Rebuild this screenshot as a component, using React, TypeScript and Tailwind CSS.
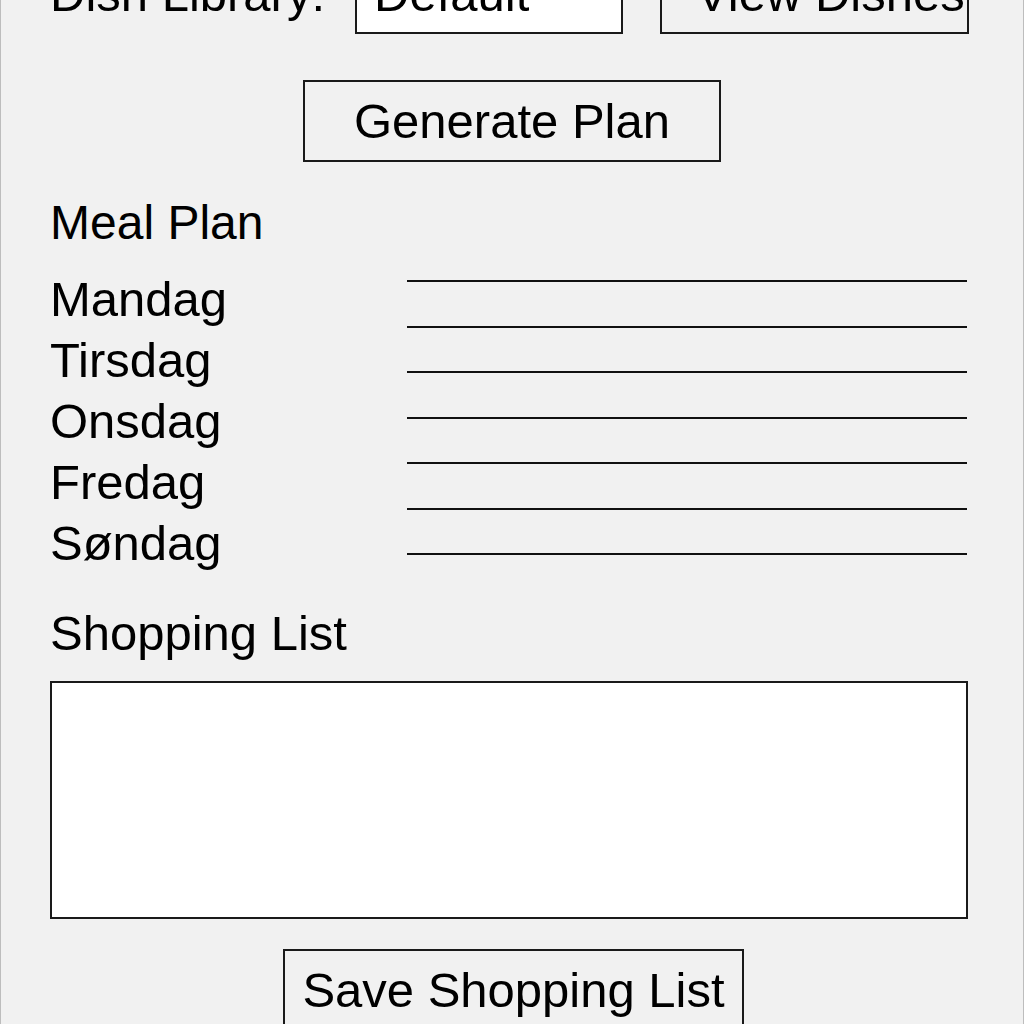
const days = ["Mandag", "Tirsdag", "Onsdag", "Fredag", "Søndag"];

function OutlineButton(props: { label: string; className?: string }) {
  return (
    <button
      className={[
        "h-[82px] border-2 border-[#1a1a1a] bg-[#f1f1f1] text-[49px] leading-[56px] text-black",
        props.className ?? "",
      ].join(" ")}
    >
      {props.label}
    </button>
  );
}

export default function App() {
  return (
    <div
      className="h-[1024px] overflow-hidden border-x border-[#bdbdbd] bg-[#f1f1f1] text-black"
      style={{ fontFamily: '"Liberation Sans", Arial, sans-serif' }}
    >
      {/* library picker row, top is cut off */}
      <div className="mt-[-46px] flex items-center pl-[49px]">
        <div className="w-[305px] text-[49px] leading-[56px]">Dish Library:</div>
        <div className="flex h-[80px] w-[268px] items-center border-2 border-[#1a1a1a] bg-white pl-[17px] text-[49px] leading-[56px]">
          Default
        </div>
        <div className="ml-[37px] flex h-[80px] w-[309px] items-center overflow-hidden whitespace-nowrap border-2 border-[#1a1a1a] pl-[34px] text-[49px] leading-[56px]">
          View Dishes
        </div>
      </div>

      <div className="mt-[46px] flex justify-center">
        <OutlineButton label="Generate Plan" className="w-[418px]" />
      </div>

      <section className="mt-[33px] pl-[49px] pr-[56px]">
        <h2 className="text-[48px] leading-[56px]">Meal Plan</h2>

        <div className="mt-[18px] grid grid-cols-[357px_1fr]">
          <div className="flex flex-col">
            {days.map((d) => (
              <div key={d} className="text-[49px] leading-[61px]">
                {d}
              </div>
            ))}
          </div>
          <div className="flex flex-col gap-[43.5px] pt-[11px]">
            {Array.from({ length: 7 }).map((_, i) => (
              <div key={i} className="h-[2px] bg-[#111]" />
            ))}
          </div>
        </div>
      </section>

      <section className="mt-[31px] pl-[49px] pr-[55px]">
        <h2 className="text-[49px] leading-[56px]">Shopping List</h2>
        <textarea className="mt-[20px] block h-[238px] w-full resize-none border-2 border-[#1a1a1a] bg-white outline-none" />
      </section>

      <div className="mt-[30px] flex justify-center pl-[3px]">
        <OutlineButton label="Save Shopping List" className="w-[461px]" />
      </div>
    </div>
  );
}
